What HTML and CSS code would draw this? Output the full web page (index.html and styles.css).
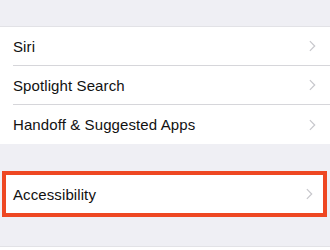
FILE: index.html
```html
<!DOCTYPE html>
<html>
<head>
<meta charset="utf-8">
<link rel="stylesheet" href="styles.css">
</head>
<body>
<div class="top"></div>
<div class="group">
  <div class="row"><span class="label">Siri</span><svg class="chev" viewBox="0 0 8 13"><path d="M1 1l5.5 5.5L1 12" /></svg></div>
  <div class="row"><span class="label">Spotlight Search</span><svg class="chev" viewBox="0 0 8 13"><path d="M1 1l5.5 5.5L1 12" /></svg></div>
  <div class="row"><span class="label">Handoff &amp; Suggested Apps</span><svg class="chev" viewBox="0 0 8 13"><path d="M1 1l5.5 5.5L1 12" /></svg></div>
</div>
<div class="spacer"></div>
<div class="highlight">
  <div class="row single"><span class="label">Accessibility</span><svg class="chev" viewBox="0 0 8 13"><path d="M1 1l5.5 5.5L1 12" /></svg></div>
</div>
<div class="spacer2"></div>
<div class="group bottom"></div>
</body>
</html>
```
FILE: styles.css
```css
html, body {
  margin: 0;
  padding: 0;
  background: #efeff4;
  font-family: "Liberation Sans", Arial, sans-serif;
  overflow: hidden;
}
.top { height: 26px; }
.group {
  background: #fff;
  border-top: 1px solid #e2e2e6;
}
.row {
  height: 39px;
  margin-left: 13px;
  padding-right: 14px;
  display: flex;
  align-items: center;
  justify-content: space-between;
  border-bottom: 1px solid #d6d6da;
  box-sizing: border-box;
}
.group .row:last-child {
  border-bottom: none;
  margin-left: 0;
  padding-left: 13px;
}
.label {
  font-size: 15px;
  color: #111;
  letter-spacing: 0.1px;
}
.chev {
  width: 7px;
  height: 12px;
  fill: none;
  stroke: #c7c7cc;
  stroke-width: 1.4;
}
.spacer { height: 27px; }
.highlight {
  margin: 0 3px 0 2px;
  border: 4px solid #ee4722;
  background: #fff;
}
.row.single {
  height: 38px;
  margin-left: 0;
  padding-left: 7px;
  padding-right: 10px;
  border-bottom: none;
}
.spacer2 { height: 29px; }
.bottom { height: 10px; }
```
